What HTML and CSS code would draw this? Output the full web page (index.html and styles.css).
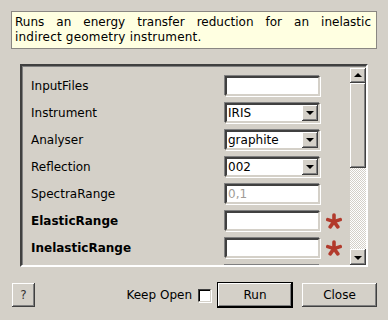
FILE: index.html
```html
<!DOCTYPE html>
<html>
<head>
<meta charset="utf-8">
<link rel="stylesheet" href="styles.css">
</head>
<body>
<div class="dialog">
  <div class="desc"><span class="line1">Runs an energy transfer reduction for an inelastic</span><span class="line2">indirect geometry instrument.</span></div>
  <div class="frame">
    <div class="content">
      <div class="row"><span class="label">InputFiles</span><span class="field"></span></div>
      <div class="row"><span class="label">Instrument</span><span class="field combo"><span class="val">IRIS</span><span class="drop"><span class="tri-down"></span></span></span></div>
      <div class="row"><span class="label">Analyser</span><span class="field combo"><span class="val">graphite</span><span class="drop"><span class="tri-down"></span></span></span></div>
      <div class="row"><span class="label">Reflection</span><span class="field combo"><span class="val">002</span><span class="drop"><span class="tri-down"></span></span></span></div>
      <div class="row"><span class="label">SpectraRange</span><span class="field"><span class="val ph">0,1</span></span></div>
      <div class="row"><span class="label bold">ElasticRange</span><span class="field"></span><svg class="star" viewBox="0 0 16 16"><g stroke="#b23a2c" stroke-width="3.6" stroke-linecap="round"><line x1="8" y1="8.6" x2="8" y2="2"/><line x1="8" y1="8.6" x2="14.2" y2="6.6"/><line x1="8" y1="8.6" x2="1.8" y2="6.6"/><line x1="8" y1="8.6" x2="11.8" y2="13.9"/><line x1="8" y1="8.6" x2="4.2" y2="13.9"/></g></svg></div>
      <div class="row"><span class="label bold">InelasticRange</span><span class="field"></span><svg class="star" viewBox="0 0 16 16"><g stroke="#b23a2c" stroke-width="3.6" stroke-linecap="round"><line x1="8" y1="8.6" x2="8" y2="2"/><line x1="8" y1="8.6" x2="14.2" y2="6.6"/><line x1="8" y1="8.6" x2="1.8" y2="6.6"/><line x1="8" y1="8.6" x2="11.8" y2="13.9"/><line x1="8" y1="8.6" x2="4.2" y2="13.9"/></g></svg></div>
      <div class="row"><span class="label"></span><span class="field"></span></div>
    </div>
    <div class="scrollbar">
      <div class="sbtn"><span class="tri-up"></span></div>
      <div class="slider"></div>
      <div class="trough"></div>
      <div class="sbtn"><span class="tri-down"></span></div>
    </div>
  </div>
  <div class="buttons">
    <div class="btn help">?</div>
    <div class="spacer"></div>
    <span class="keep">Keep Open</span>
    <span class="check"></span>
    <div class="btn run">Run</div>
    <div class="btn close">Close</div>
  </div>
</div>
</body>
</html>
```

FILE: styles.css
```css
html, body {
  margin: 0;
  padding: 0;
  background: #d4d0c8;
}
body {
  width: 388px;
  height: 320px;
  overflow: hidden;
  font-family: "DejaVu Sans", sans-serif;
  font-size: 12px;
  color: #000;
}
.dialog {
  padding: 11px 11px 0 11px;
  display: flex;
  flex-direction: column;
}
.desc {
  height: 30px;
  background: #ffffe1;
  border: 1px solid #8a8782;
  padding: 3px 5px 3px 3px;
  line-height: 15px;
}
.line1 {
  display: block;
  text-align: justify;
  text-align-last: justify;
}
.line2 {
  display: block;
  letter-spacing: 0.2px;
}
.frame {
  margin: 15px 9px 0 9px;
  height: 199px;
  border: 2px solid;
  border-color: #404040 #fff #fff #404040;
  box-shadow: inset 1px 1px #808080;
  display: flex;
}
.content {
  flex: 1;
  overflow: hidden;
  padding: 9px 0 0 9px;
  display: flex;
  flex-direction: column;
  gap: 7px;
}
.row {
  display: flex;
  align-items: center;
  height: 20px;
  flex: none;
}
.label {
  width: 193px;
  line-height: 20px;
  padding-top: 1px;
}
.bold { font-weight: bold; }
.field {
  box-sizing: border-box;
  width: 95px;
  height: 20px;
  background: #fff;
  border: 2px solid;
  border-color: #404040 #d4d0c8 #d4d0c8 #404040;
  box-shadow: 1px 1px #fff, -1px -1px #808080;
  margin: 1px 0 0 1px;
  display: flex;
  align-items: center;
}
.val {
  padding-left: 1px;
  line-height: 16px;
  flex: 1;
}
.ph { color: #a09c96; }
.drop {
  width: 16px;
  height: 16px;
  box-sizing: border-box;
  background: #d4d0c8;
  box-shadow: inset -1px -1px #404040, inset 1px 1px #fff, inset -2px -2px #808080;
  display: flex;
  align-items: center;
  justify-content: center;
}
.tri-down {
  width: 0;
  height: 0;
  border-left: 4px solid transparent;
  border-right: 4px solid transparent;
  border-top: 4px solid #000;
  margin-top: 1px;
}
.tri-up {
  width: 0;
  height: 0;
  border-left: 4px solid transparent;
  border-right: 4px solid transparent;
  border-bottom: 4px solid #000;
  margin-bottom: 1px;
}
.star {
  width: 16px;
  height: 16px;
  margin-left: 6px;
  margin-top: 1px;
}
.scrollbar {
  width: 16px;
  margin-top: 2px;
  display: flex;
  flex-direction: column;
}
.sbtn {
  height: 15px;
  flex: none;
  background: #d4d0c8;
  box-shadow: inset -1px -1px #404040, inset 1px 1px #fff, inset -2px -2px #808080;
  display: flex;
  align-items: center;
  justify-content: center;
}
.sbtn:last-child { height: 16px; }
.slider {
  height: 85px;
  flex: none;
  background: #d4d0c8;
  box-shadow: inset -1px -1px #404040, inset 1px 1px #fff, inset -2px -2px #808080, inset 2px 2px #d4d0c8;
}
.trough {
  flex: 1;
  background-color: #d4d0c8;
  background-image: conic-gradient(#fff 25%, #d4d0c8 0 50%, #fff 0 75%, #d4d0c8 0);
  background-size: 2px 2px;
}
.buttons {
  margin-top: 16px;
  display: flex;
  align-items: center;
  padding-left: 1px;
}
.btn {
  box-sizing: border-box;
  height: 24px;
  background: #d4d0c8;
  box-shadow: inset -1px -1px #404040, inset 1px 1px #fff, inset -2px -2px #808080;
  display: flex;
  align-items: center;
  justify-content: center;
  color: #000;
}
.help {
  width: 23px;
  color: #333;
}
.spacer { flex: 1; }
.keep { margin-right: 6px; }
.check {
  box-sizing: border-box;
  width: 13px;
  height: 13px;
  background: #fff;
  border: 1px solid;
  border-color: #404040 #d4d0c8 #d4d0c8 #404040;
  box-shadow: 1px 1px #fff, inset 1px 1px #000;
  margin-right: 7px;
}
.run {
  width: 74px;
  outline: 1px solid #000;
  box-shadow: inset -1px -1px #000, inset 1px 1px #fff, inset -2px -2px #808080;
  margin-right: 10px;
}
.close {
  width: 75px;
}
```
